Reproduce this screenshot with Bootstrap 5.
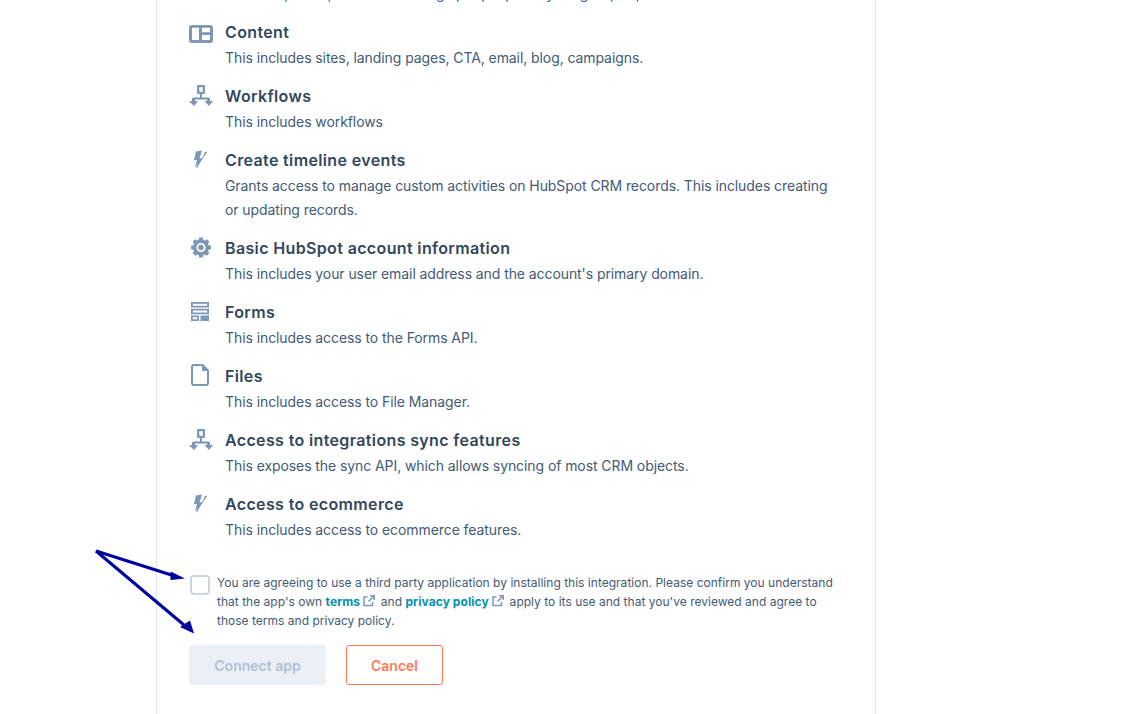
<!DOCTYPE html>
<html lang="en"><head><meta charset="utf-8">
<link href="https://cdn.jsdelivr.net/npm/bootstrap@5.3.0/dist/css/bootstrap.min.css" rel="stylesheet">
<style>
html,body{height:714px;overflow:hidden;background:#fff}
body{font-family:"Inter","Liberation Sans",sans-serif;color:#33475b}
.sheet{width:720px;height:714px;margin-left:156px;border-left:1px solid #dfe3eb;border-right:1px solid #dfe3eb;padding:0 32px;overflow:hidden;background:#fff}
.clipline{height:24px;margin-top:-18px;font-size:14px;line-height:24px;color:#425b76;margin-left:36px;margin-bottom:13px;white-space:nowrap;overflow:hidden}
.scope{height:64px}
.scope.tall{height:88px}
.scope-ico{width:36px;flex:none;padding-top:2px}
.scope-ico svg{display:block;fill:#7c98b6}
.ico-content{padding-top:6px}
.ico-flow{padding-top:1px}
.ico-gear{padding-left:2px}
.ico-form{padding-top:3px}
.ico-file{padding-top:1px}
.scope-name{font-size:16px;font-weight:600;line-height:24px;height:24px;margin-top:1px;color:#33475b;letter-spacing:.36px}
.scope-desc{font-size:14px;line-height:24px;color:#425b76;letter-spacing:-.08px;margin-top:2px}
.agree{margin-top:19px}
.tick{width:20px;height:20px;flex:none;border:2px solid #cbd6e2;border-radius:4px;background:#fff;margin:1px 7px 0 1px}
.agree-text{font-size:12px;line-height:19px;color:#425b76;margin-top:-1px;width:630px;letter-spacing:.015px}
.agree-text a{color:#0091ae;font-weight:700;text-decoration:none;letter-spacing:.08px}
.ext{display:inline-block;vertical-align:-1px;margin:0 2px 0 0;fill:none;stroke:#7c98b6;stroke-width:1.5}
.act{margin-top:15px;gap:20px}
.btn-connect{width:137px;height:40px;background:#eaf0f6;color:#b0c1d4;border:1px solid #eaf0f6;border-radius:3px;font-size:14px;font-weight:600;padding:0}
.btn-cancel{width:97px;height:40px;background:#fff;color:#ff7a59;border:1px solid #ff7a59;border-radius:3px;font-size:14px;font-weight:600;padding:0}
.btn-cancel:hover{color:#ff7a59;background:#fff;border-color:#ff7a59}
.arrows{position:absolute;left:0;top:0;pointer-events:none}
</style></head><body>
<div class="sheet">
<div class="clipline">Contacts, deals, tickets and things people put in your group reports.</div>

<div class="scope d-flex"><div class="scope-ico ico-content"><svg width="24" height="18" viewBox="0 0 24 18"><path fill-rule="evenodd" d="M3 0h18a3 3 0 0 1 3 3v12a3 3 0 0 1-3 3H3a3 3 0 0 1-3-3V3a3 3 0 0 1 3-3zM3 2.700V15h7V2.700zM13 2.700v4.600h8V2.700zM13 10v5h8v-5z"/></svg></div><div><div class="scope-name">Content</div><div class="scope-desc">This includes sites, landing pages, CTA, email, blog, campaigns.</div></div></div>

<div class="scope d-flex"><div class="scope-ico ico-flow"><svg width="24" height="23" viewBox="0 0 24 23"><path fill-rule="evenodd" d="M9 1h6a1 1 0 0 1 1 1v7a1 1 0 0 1-1 1h-2v3.500h6.500a1.500 1.500 0 0 1 1.500 1.500v2h3l-4 5-4.500-5H18v-1.500H6V17h3l-4 5-5-5h3v-2a1.500 1.500 0 0 1 1.500-1.500H11V10H9a1 1 0 0 1-1-1V2a1 1 0 0 1 1-1zM10.300 3.300v4.400h3.400V3.300z"/></svg></div><div><div class="scope-name">Workflows</div><div class="scope-desc">This includes workflows</div></div></div>

<div class="scope tall d-flex"><div class="scope-ico"><svg width="22" height="20" viewBox="0 0 22 20"><path d="M7 2.500L13 1.500l-2.500 8 2.500-.5-7 9.500L8 11H5z"/><path d="M16 2.500l2 .8L11.800 12.500 8 19l-1-.5L9.800 12l4.200-4z"/></svg></div><div><div class="scope-name">Create timeline events</div><div class="scope-desc">Grants access to manage custom activities on HubSpot CRM records. This includes creating<br>or updating records.</div></div></div>

<div class="scope d-flex"><div class="scope-ico ico-gear"><svg width="20" height="21" viewBox="0 0 22 22"><path fill-rule="evenodd" d="M9 0h4l.5 2.600 1.700.7 2.200-1.500 2.800 2.800-1.500 2.200.7 1.700 2.600.5v4l-2.600.5-.7 1.700 1.500 2.200-2.800 2.800-2.200-1.500-1.700.7L13 22H9l-.5-2.600-1.700-.7-2.200 1.500-2.800-2.800 1.500-2.200-.7-1.700L0 13V9l2.600-.5.7-1.700-1.500-2.200 2.800-2.800 2.200 1.500 1.700-.7zM11 6a5 5 0 1 0 0 10 5 5 0 0 0 0-10z"/><circle cx="11" cy="11" r="3"/></svg></div><div><div class="scope-name">Basic HubSpot account information</div><div class="scope-desc">This includes your user email address and the account's primary domain.</div></div></div>

<div class="scope d-flex"><div class="scope-ico ico-form"><svg width="21" height="20" viewBox="0 0 21 20"><path fill-rule="evenodd" d="M2 0h18v5.500H2zM3.800 1.800v1.900h14.400V1.800zM2 6.800h18v5.500H2zM3.800 8.600v1.900h14.400V8.600zM2 13.500h8v5.500H2zM3.800 15.300v1.900h4.400v-1.900zM11.500 13.500H20v5.500h-8.500z"/></svg></div><div><div class="scope-name">Forms</div><div class="scope-desc">This includes access to the Forms API.</div></div></div>

<div class="scope d-flex"><div class="scope-ico ico-file"><svg width="21" height="22" viewBox="0 0 21 22"><path fill-rule="evenodd" d="M5 0h9l6 6v13a3 3 0 0 1-3 3H5a3 3 0 0 1-3-3V3a3 3 0 0 1 3-3zM5 2a1 1 0 0 0-1 1v16a1 1 0 0 0 1 1h12a1 1 0 0 0 1-1V7h-5V2z"/></svg></div><div><div class="scope-name">Files</div><div class="scope-desc">This includes access to File Manager.</div></div></div>

<div class="scope d-flex"><div class="scope-ico ico-flow"><svg width="24" height="23" viewBox="0 0 24 23"><path fill-rule="evenodd" d="M9 1h6a1 1 0 0 1 1 1v7a1 1 0 0 1-1 1h-2v3.500h6.500a1.500 1.500 0 0 1 1.500 1.500v2h3l-4 5-4.500-5H18v-1.500H6V17h3l-4 5-5-5h3v-2a1.500 1.500 0 0 1 1.500-1.500H11V10H9a1 1 0 0 1-1-1V2a1 1 0 0 1 1-1zM10.300 3.300v4.400h3.400V3.300z"/></svg></div><div><div class="scope-name">Access to integrations sync features</div><div class="scope-desc">This exposes the sync API, which allows syncing of most CRM objects.</div></div></div>

<div class="scope d-flex"><div class="scope-ico"><svg width="22" height="20" viewBox="0 0 22 20"><path d="M7 2.500L13 1.500l-2.500 8 2.500-.5-7 9.500L8 11H5z"/><path d="M16 2.500l2 .8L11.800 12.500 8 19l-1-.5L9.800 12l4.200-4z"/></svg></div><div><div class="scope-name">Access to ecommerce</div><div class="scope-desc">This includes access to ecommerce features.</div></div></div>

<div class="agree d-flex"><div class="tick"></div><div class="agree-text">You are agreeing to use a third party application by installing this integration. Please confirm you understand that the app's own <a href="#">terms</a> <svg class="ext" width="12" height="12" viewBox="0 0 12 12"><path d="M9.500 7v3.500h-8.500v-8.500h3.500M7 .8h4.200V5M11 1L5.500 6.500"/></svg> and <a href="#">privacy policy</a> <svg class="ext" width="12" height="12" viewBox="0 0 12 12"><path d="M9.500 7v3.500h-8.500v-8.500h3.500M7 .8h4.200V5M11 1L5.500 6.500"/></svg> apply to its use and that you've reviewed and agree to those terms and privacy policy.</div></div>

<div class="act d-flex"><button class="btn btn-connect" type="button">Connect app</button><button class="btn btn-cancel" type="button">Cancel</button></div>
</div>
<svg class="arrows" width="220" height="650" viewBox="0 0 220 650"><g fill="#0000a0" stroke="#0000a0" stroke-width="0"><path d="M96 551L173 575.500" stroke-width="3" fill="none"/><path d="M185 578.500L170.500 571.500L170.500 580z"/><path d="M96 551L184 625" stroke-width="3" fill="none"/><path d="M194 633.500L180 627L190 620.500z"/></g></svg>
</body></html>
